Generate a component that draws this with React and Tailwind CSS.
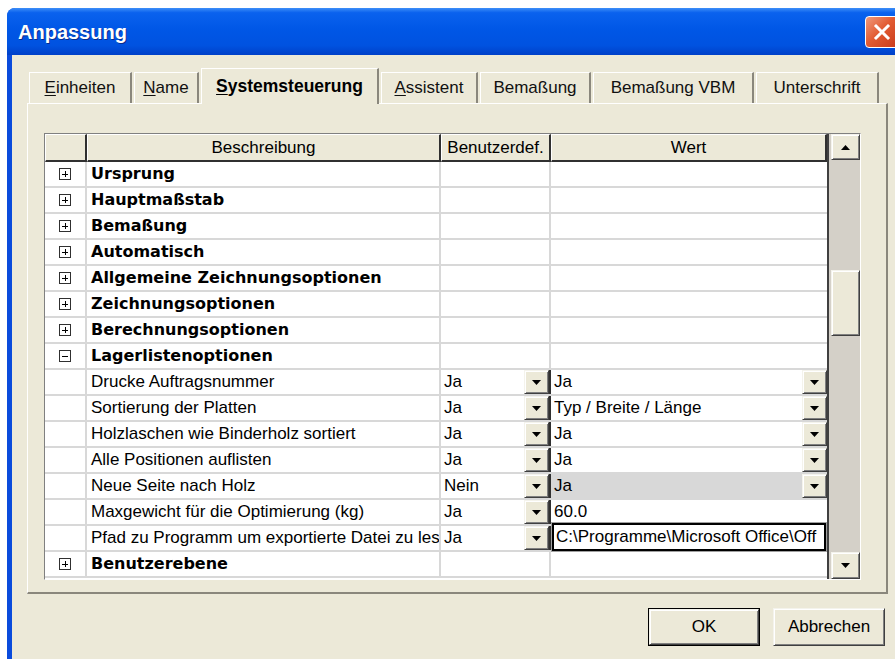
import React from "react";

// Raised 3D face used by scroll buttons, combo buttons and push buttons
const RAISED =
  "bg-[#ECE9D8] border border-t-[#F4F3EC] border-l-[#F4F3EC] border-r-[#404040] border-b-[#404040] shadow-[inset_1px_1px_#fff,inset_-1px_-1px_#808080]";

const BOLD = "font-['DejaVu_Sans',sans-serif] font-bold text-[16px]";

const ROWS = [
  { label: "Ursprung", group: "plus" },
  { label: "Hauptmaßstab", group: "plus" },
  { label: "Bemaßung", group: "plus" },
  { label: "Automatisch", group: "plus" },
  { label: "Allgemeine Zeichnungsoptionen", group: "plus" },
  { label: "Zeichnungsoptionen", group: "plus" },
  { label: "Berechnungsoptionen", group: "plus" },
  { label: "Lagerlistenoptionen", group: "minus" },
  { label: "Drucke Auftragsnummer", user: "Ja", value: "Ja", combo: true },
  { label: "Sortierung der Platten", user: "Ja", value: "Typ / Breite / Länge", combo: true },
  { label: "Holzlaschen wie Binderholz sortiert", user: "Ja", value: "Ja", combo: true },
  { label: "Alle Positionen auflisten", user: "Ja", value: "Ja", combo: true },
  { label: "Neue Seite nach Holz", user: "Nein", value: "Ja", combo: true, disabled: true },
  { label: "Maxgewicht für die Optimierung (kg)", user: "Ja", value: "60.0" },
  { label: "Pfad zu Programm um exportierte Datei zu les", user: "Ja", value: "C:\\Programme\\Microsoft Office\\Off", editing: true },
  { label: "Benutzerebene", group: "plus" },
];

const TABS = [
  { label: "Einheiten", key: "E", w: "w-[103px]" },
  { label: "Name", key: "N", w: "w-[65px]" },
  { label: "Systemsteuerung", key: "S", w: "w-[178px]", active: true },
  { label: "Assistent", key: "A", w: "w-[97px]" },
  { label: "Bemaßung", w: "w-[111px]" },
  { label: "Bemaßung VBM", w: "w-[161px]" },
  { label: "Unterschrift", w: "w-[123px]" },
];

function Tri({ up }) {
  return (
    <svg width="9" height="5" viewBox="0 0 9 5">
      <path d={up ? "M4.5 0L9 5H0z" : "M0 0h9L4.5 5z"} fill="#000" />
    </svg>
  );
}

function ComboButton() {
  return (
    <div className={RAISED + " w-[25px] h-full flex items-center justify-center shrink-0"}>
      <Tri />
    </div>
  );
}

function TreeBox({ open }) {
  return (
    <div className="w-[12px] h-[12px] border border-[#303030] bg-white relative">
      <div className="absolute left-[2px] right-[2px] top-[4.5px] h-px bg-black" />
      {!open && <div className="absolute top-[2px] bottom-[2px] left-[4.5px] w-px bg-black" />}
    </div>
  );
}

function Tab({ tab }) {
  const label = tab.key ? (
    <>
      <u className="underline-offset-2">{tab.key}</u>
      {tab.label.slice(1)}
    </>
  ) : (
    tab.label
  );
  if (tab.active) {
    return (
      <div className={tab.w + " h-[36px] -mb-px relative z-10 bg-[#ECE9D8] border-t border-l border-white border-r-2 border-r-[#8A877C] flex items-center justify-center text-[17.5px] font-bold text-black"}>
        {label}
      </div>
    );
  }
  return (
    <div className={tab.w + " h-[31px] bg-[#ECE9D8] border-t border-l border-white border-r-2 border-r-[#8A877C] flex items-center justify-center text-[17px] text-[#111]"}>
      {label}
    </div>
  );
}

function GridRow({ row }) {
  const line = "border-[#D8D8D8]";
  const isGroup = !!row.group;
  return (
    <div className={"flex h-[26px] border-b-2 " + line}>
      <div className={"w-[42px] shrink-0 flex items-center justify-center border-r-2 " + line}>
        {isGroup && <TreeBox open={row.group === "minus"} />}
      </div>
      <div className={"w-[354px] shrink-0 flex items-center pl-[4px] overflow-hidden whitespace-nowrap border-r-2 " + line + (isGroup ? " " + BOLD : "")}>
        {row.label}
      </div>
      <div className={"w-[110px] shrink-0 flex items-center border-r-2 " + (row.user ? "border-[#303030]" : line)}>
        {row.user && (
          <>
            <span className="flex-1 pl-[3px]">{row.user}</span>
            <ComboButton />
          </>
        )}
      </div>
      <div className="w-[276px] shrink-0 flex items-center relative">
        {row.combo && (
          <>
            <span className={"flex-1 h-full flex items-center pl-[3px] " + (row.disabled ? "bg-[#D8D8D8]" : "")}>{row.value}</span>
            <ComboButton />
          </>
        )}
        {!row.combo && !row.editing && row.value && <span className="pl-[3px]">{row.value}</span>}
        {row.editing && (
          <div className="absolute left-0 right-0 -top-[4px] h-[30px] border border-[#A0A0A0] bg-white">
            <div className="h-full border-2 border-black flex items-center pl-[2px] whitespace-nowrap">
              {row.value}
            </div>
          </div>
        )}
      </div>
    </div>
  );
}

function ScrollBar() {
  return (
    <div className="w-[33px] shrink-0 flex flex-col border-l-2 border-[#404040] bg-[#D4D0C8] pl-[2px]">
      <div className={RAISED + " h-[26px] flex items-center justify-center"}>
        <Tri up />
      </div>
      <div className="h-[110px]" />
      <div className={RAISED + " h-[66px]"} />
      <div className="flex-1" />
      <div className={RAISED + " h-[27px] flex items-center justify-center"}>
        <Tri />
      </div>
    </div>
  );
}

function Grid() {
  const head = "bg-[#ECE9D8] border-t border-l border-white border-r-2 border-b-2 border-r-[#303030] border-b-[#303030] flex items-center justify-center";
  return (
    <div className="w-[817px] h-[447px] border border-t-[#808080] border-l-[#808080] border-r-white border-b-white flex">
      <div className="flex flex-col bg-white text-[17px] text-black">
        <div className="flex h-[28px]">
          <div className={head + " w-[42px]"} />
          <div className={head + " w-[354px]"}>Beschreibung</div>
          <div className={head + " w-[110px]"}>Benutzerdef.</div>
          <div className={head + " w-[276px]"}>Wert</div>
        </div>
        {ROWS.map((r) => (
          <GridRow key={r.label} row={r} />
        ))}
      </div>
      <ScrollBar />
    </div>
  );
}

function CloseButton() {
  return (
    <div className="w-[34px] h-[32px] rounded-[4px] border border-white bg-[linear-gradient(135deg,#F09A7C_0%,#E25C33_45%,#C8391A_100%)] flex items-center justify-center">
      <svg width="18" height="18" viewBox="0 0 18 18">
        <path d="M3 3L15 15M15 3L3 15" stroke="#fff" strokeWidth="3" strokeLinecap="square" />
      </svg>
    </div>
  );
}

export default function App() {
  return (
    <div className="w-[895px] h-[659px] overflow-hidden bg-white pt-[8px] pl-[7px] font-['Liberation_Sans',Arial,sans-serif]">
      <div className="w-[900px] h-[660px] rounded-t-[8px] bg-[#0A4BDC] flex flex-col overflow-hidden">
        {/* title bar */}
        <div className="h-[47px] shrink-0 flex items-center justify-between pl-[11px] bg-[linear-gradient(to_bottom,#3D8EF8_0%,#0A62EE_10%,#0057E6_45%,#0052E0_80%,#0040C8_100%)]">
          <span className="text-white text-[20px] font-bold [text-shadow:1px_1px_0_#0A2C8C]">Anpassung</span>
          <div className="mr-[8px]">
            <CloseButton />
          </div>
        </div>
        {/* client area */}
        <div className="flex-1 ml-[5px] bg-[#ECE9D8] flex flex-col">
          <div className="flex items-end gap-[2px] pl-[17px] pt-[13px] h-[48px]">
            {TABS.map((t) => (
              <Tab key={t.label} tab={t} />
            ))}
          </div>
          <div className="ml-[15px] w-[861px] h-[491px] border-t border-l border-white border-r-2 border-b-2 border-r-[#8A877C] border-b-[#8A877C] pl-[16px] pt-[29px]">
            <Grid />
          </div>
          <div className="flex gap-[13px] pl-[636px] pt-[14px] text-[17px]">
            <div className="w-[112px] h-[38px] border border-black">
              <div className={RAISED + " h-full flex items-center justify-center"}>OK</div>
            </div>
            <div className={RAISED + " w-[112px] h-[38px] flex items-center justify-center"}>Abbrechen</div>
          </div>
        </div>
      </div>
    </div>
  );
}
